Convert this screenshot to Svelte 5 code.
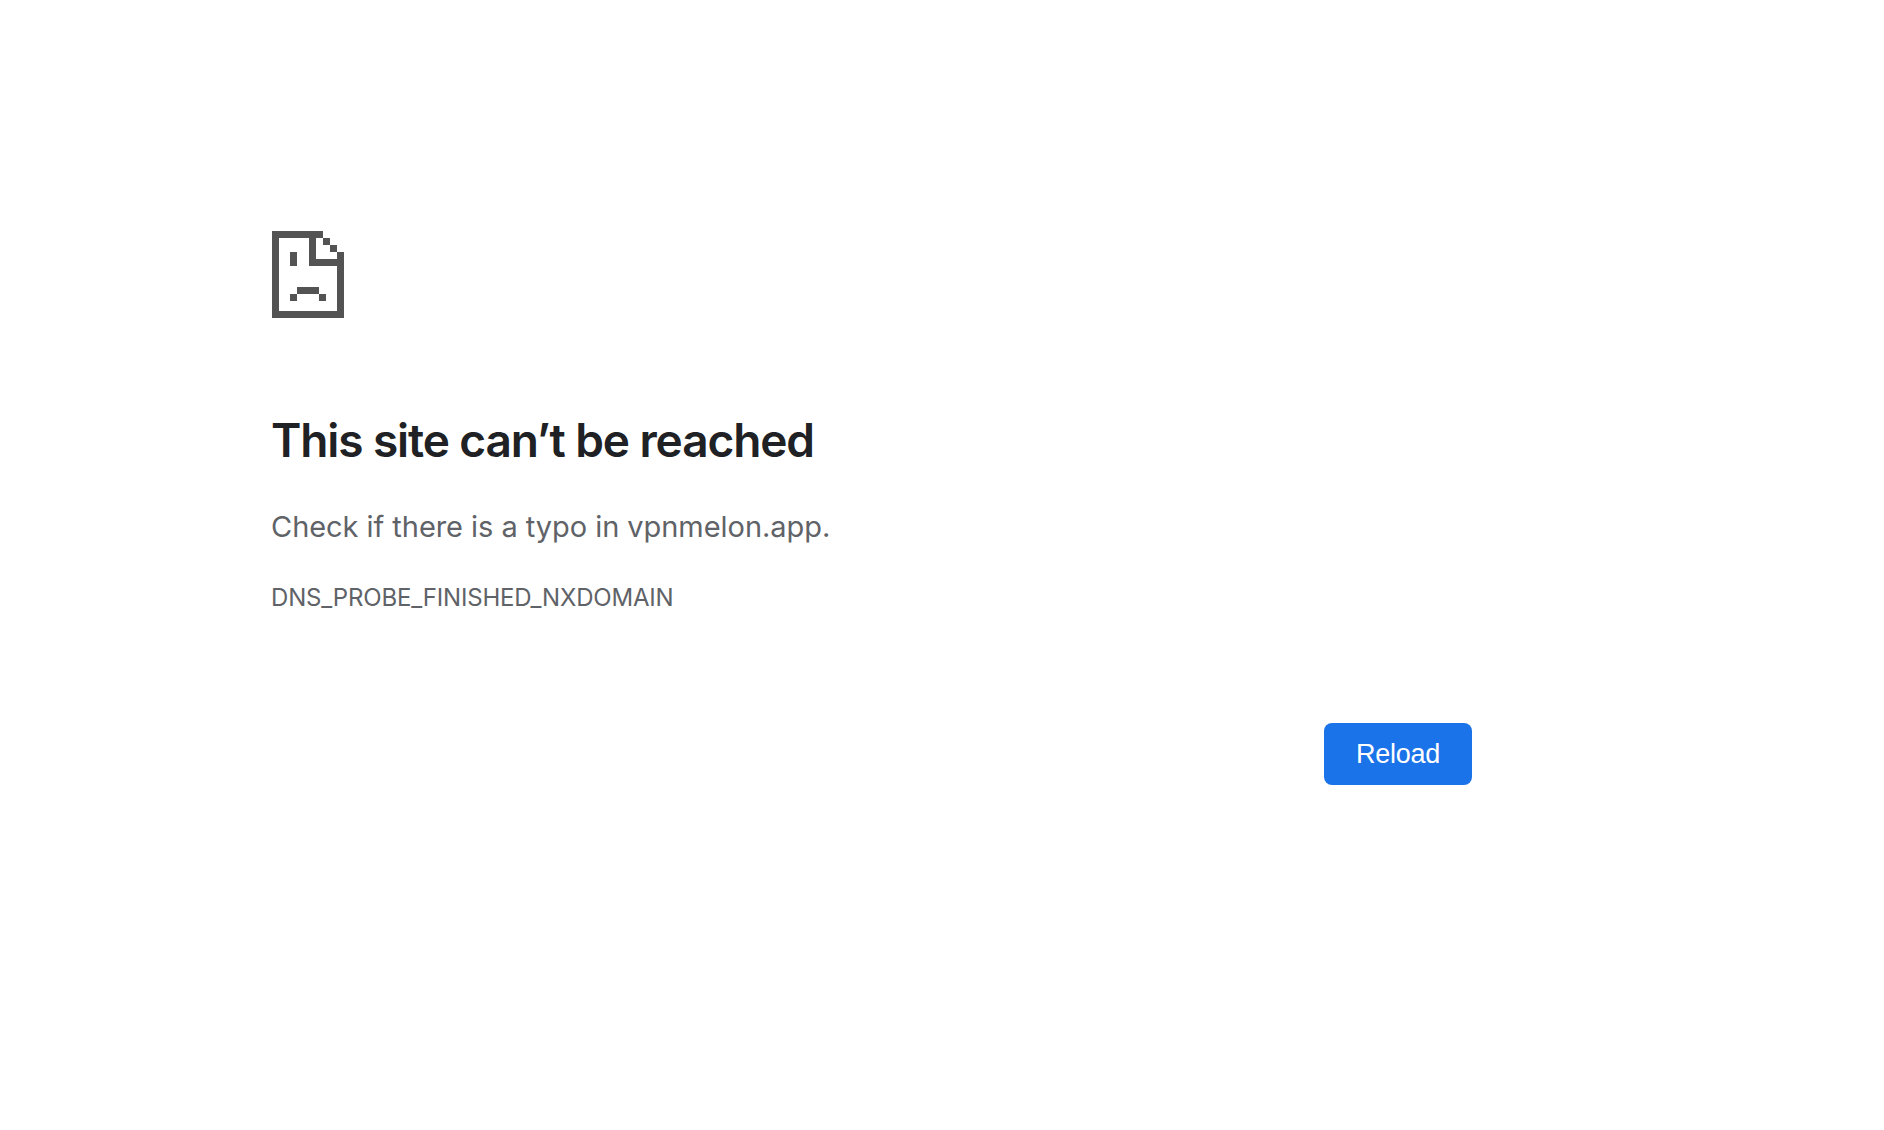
<script>
  let host = "vpnmelon.app";
  let code = "DNS_PROBE_FINISHED_NXDOMAIN";
</script>

<main class="interstitial">
  <svg class="icon" width="72" height="87" viewBox="0 0 72 87" shape-rendering="crispEdges" aria-hidden="true">
    <path
      fill="#535353"
      d="M0 0H51V7H58V14H65V21H72V87H0ZM7 7V80H65V35H37V7ZM44 7V28H65V21H58V14H51V7ZM18 21H25V35H18ZM25 56H47V63H54V70H47V63H25V70H18V63H25Z"
      fill-rule="evenodd"
    />
  </svg>

  <h1>This site can’t be reached</h1>
  <p class="summary">Check if there is a typo in {host}.</p>
  <div class="code">{code}</div>

  <div class="buttons">
    <button type="button">Reload</button>
  </div>
</main>

<style>
  :global(body) {
    background: #fff;
    font-family: Inter, "Liberation Sans", sans-serif;
  }
  .interstitial {
    width: 1200px;
    margin-left: 272px;
    padding-top: 231px;
    height: 899px;
  }
  .icon {
    display: block;
  }
  h1 {
    margin: 94px 0 0 -1px;
    font-size: 46px;
    line-height: 56px;
    font-weight: 600;
    letter-spacing: -1.1px;
    color: #202124;
  }
  .summary {
    margin: 39px 0 0 -1px;
    font-size: 29px;
    line-height: 40px;
    letter-spacing: -0.05px;
    color: #5f6368;
  }
  .code {
    margin: 36px 0 0 -1px;
    font-size: 24px;
    line-height: 30px;
    letter-spacing: -0.18px;
    color: #5f6368;
  }
  .buttons {
    display: flex;
    justify-content: flex-end;
    margin-top: 110px;
  }
  button {
    width: 148px;
    height: 62px;
    border: 0;
    border-radius: 8px;
    background: #1a73e8;
    color: #fff;
    font-family: "Liberation Sans", Arial, sans-serif;
    font-size: 27px;
    letter-spacing: -0.3px;
    padding: 0;
  }
</style>
